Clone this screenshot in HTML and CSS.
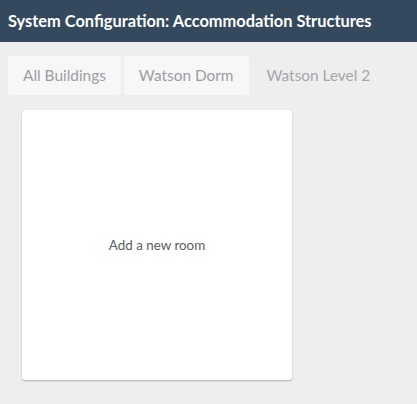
FILE: index.html
```html
<!DOCTYPE html>
<html>
<head>
<meta charset="utf-8">
<link rel="stylesheet" href="styles.css">
</head>
<body>
<header class="topbar">System Configuration: Accommodation Structures</header>
<nav class="crumbs">
  <a class="crumb">All Buildings</a>
  <a class="crumb">Watson Dorm</a>
  <span class="crumb current">Watson Level 2</span>
</nav>
<main class="rooms">
  <div class="room-card">Add a new room</div>
</main>
</body>
</html>
```
FILE: styles.css
```css
html, body {
  margin: 0;
  padding: 0;
}
body {
  background: #eeeeee;
  font-family: Lato, "Open Sans", sans-serif;
  width: 417px;
  height: 404px;
  overflow: hidden;
}
.topbar {
  height: 42px;
  box-sizing: border-box;
  background: #34495e;
  color: #ffffff;
  font-weight: 700;
  font-size: 16.4px;
  line-height: 42px;
  padding: 0 8px;
  white-space: nowrap;
}
.crumbs {
  display: flex;
  gap: 3px;
  padding: 14px 8px 0;
}
.crumb {
  display: block;
  height: 39px;
  line-height: 39px;
  padding: 0 15px;
  font-size: 15.4px;
  color: #9b9ea3;
  background: #f7f7f7;
  border-radius: 2px;
}
.crumb.current {
  background: transparent;
  color: #a4a6aa;
}
.rooms {
  padding: 15px 22px 0;
}
.room-card {
  width: 270px;
  height: 270px;
  background: #ffffff;
  border-radius: 3px;
  box-shadow: 0 1px 2px rgba(0, 0, 0, 0.25);
  display: flex;
  align-items: center;
  justify-content: center;
  font-size: 13.4px;
  color: #5a5d62;
}
```
